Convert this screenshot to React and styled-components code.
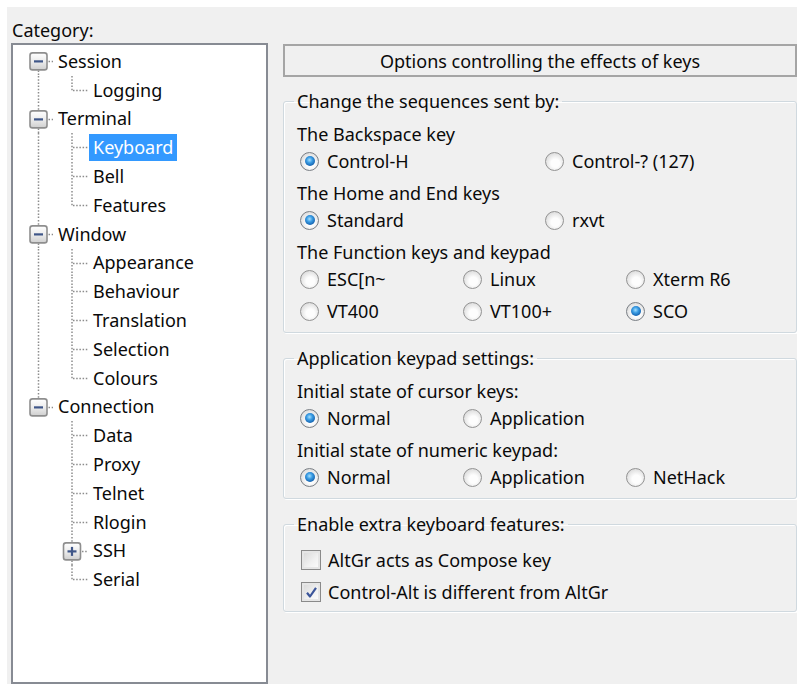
import React from "react";
import styled, { createGlobalStyle } from "styled-components";

const GlobalStyle = createGlobalStyle`
  html, body {
    margin: 0;
    background: #fff;
  }
  body {
    font-family: "Noto Sans", "Liberation Sans", sans-serif;
    font-size: 18px;
    color: #0a0a0a;
  }
`;

const ROW_H = 28.8;

const Dialog = styled.div`
  margin: 7px 0 0 7px;
  height: calc(100vh - 7px);
  box-sizing: border-box;
  background: #f0f0f0;
  padding-left: 4px;
  display: grid;
  grid-template-columns: 257px 1fr;
  grid-template-rows: 36px 1fr;
  column-gap: 15px;
  overflow: hidden;
`;

const CategoryLabel = styled.div`
  grid-column: 1;
  padding: 11px 0 0 1px;
  line-height: 24px;
`;

const TreeBox = styled.div`
  grid-column: 1;
  grid-row: 2;
  height: 641px;
  box-sizing: border-box;
  border: 2px solid #878b93;
  background: #fff;
  padding-top: 2px;
`;

const TreeRow = styled.div`
  display: flex;
  align-items: center;
  height: ${ROW_H}px;
`;

const Guides = styled.svg`
  display: block;
  flex: none;
  overflow: visible;
`;

const NodeLabel = styled.span`
  padding: 0 4px;
  height: 27px;
  line-height: 27px;
  white-space: nowrap;
  background: ${(p) => (p.$selected ? "#3399ff" : "transparent")};
  color: ${(p) => (p.$selected ? "#fff" : "inherit")};
`;

const Panel = styled.div`
  grid-column: 2;
  grid-row: 2;
  margin-top: 1px;
  display: flex;
  flex-direction: column;
  gap: 15px;
  min-width: 0;
`;

const Banner = styled.div`
  height: 33px;
  box-sizing: border-box;
  border: 2px solid #a5a5a5;
  margin-bottom: -1px;
  display: flex;
  align-items: center;
  justify-content: center;
`;

const Group = styled.fieldset`
  margin: 0;
  padding: 0 0 ${(p) => p.$padBottom}px 0;
  border: 1px solid #d0d9df;
  border-radius: 3px;
  box-shadow: inset 1px 1px 0 #fff, 1px 1px 0 #fff;
  min-width: 0;
`;

const Legend = styled.legend`
  margin-left: 10px;
  padding: 0 3px;
  line-height: 20px;
`;

const GroupBody = styled.div`
  padding: ${(p) => p.$padTop}px 0 0 13px;
  display: flex;
  flex-direction: column;
`;

const Caption = styled.div`
  height: 22px;
  line-height: 22px;
  white-space: nowrap;
`;

const OptionRow = styled.div`
  display: grid;
  grid-template-columns: repeat(${(p) => p.$cols}, ${(p) => p.$colWidth}px);
  height: 32px;
  align-items: center;
  padding-left: ${(p) => p.$inset}px;
  & + ${Caption} {
    margin-top: 5px;
  }
`;

const Option = styled.label`
  display: flex;
  align-items: center;
  gap: ${(p) => p.$gap}px;
  white-space: nowrap;
`;

const RadioMark = styled.span`
  width: 19px;
  height: 19px;
  flex: none;
  box-sizing: border-box;
  border-radius: 50%;
  border: 1.5px solid ${(p) => (p.$on ? "#7a7f85" : "#939393")};
  background: radial-gradient(circle at 55% 60%, #fdfdfd 0 30%, #e4e4e4 65%, #c9c9c9 100%);
  display: grid;
  place-items: center;
  &::after {
    content: "";
    width: 10px;
    height: 10px;
    border-radius: 50%;
    background: ${(p) =>
      p.$on
        ? "radial-gradient(circle at 45% 40%, #a6e0ff 0, #3a9ce3 35%, #1460ad 75%, #0d3e76 100%)"
        : "transparent"};
  }
`;

const CheckMark = styled.span`
  width: 20px;
  height: 20px;
  flex: none;
  box-sizing: border-box;
  border: 1.5px solid #8a8a8a;
  background: linear-gradient(135deg, #d6d6d6, #f2f2f2 60%, #fdfdfd);
  box-shadow: inset 0 0 0 2px #e6e6e6;
  display: grid;
  place-items: center;
`;

const treeData = [
  { label: "Session", children: ["Logging"] },
  { label: "Terminal", children: ["Keyboard", "Bell", "Features"] },
  {
    label: "Window",
    children: ["Appearance", "Behaviour", "Translation", "Selection", "Colours"],
  },
  {
    label: "Connection",
    children: ["Data", "Proxy", "Telnet", "Rlogin", { label: "SSH", collapsed: true }, "Serial"],
  },
];

const flattenTree = (nodes) => {
  const rows = [];
  nodes.forEach((node, i) => {
    const lastTop = i === nodes.length - 1;
    rows.push({ label: node.label, level: 0, first: i === 0, last: lastTop, expander: "minus" });
    node.children.forEach((child, j) => {
      const c = typeof child === "string" ? { label: child } : child;
      rows.push({
        label: c.label,
        level: 1,
        last: j === node.children.length - 1,
        trunk: !lastTop,
        expander: c.collapsed ? "plus" : null,
      });
    });
  });
  return rows;
};

const TRUNK_X = 25.5;
const BRANCH_X = 59;
const DOT = { stroke: "#8c8c8c", strokeWidth: 1.5, strokeDasharray: "1.5 1.7" };

const Expander = ({ cx, cy, kind }) => (
  <g>
    <rect
      x={cx - 8.5}
      y={cy - 8.5}
      width="17"
      height="17"
      rx="2.5"
      fill="url(#expanderFill)"
      stroke="#8e8e8e"
      strokeWidth="1.6"
    />
    <line x1={cx - 4.5} y1={cy} x2={cx + 4.5} y2={cy} stroke="#3f5688" strokeWidth="2.2" />
    {kind === "plus" && (
      <line x1={cx} y1={cy - 4.5} x2={cx} y2={cy + 4.5} stroke="#3f5688" strokeWidth="2.2" />
    )}
  </g>
);

const RowGuides = ({ row }) => {
  const cy = ROW_H / 2;
  const width = row.level === 0 ? 41 : 76;
  return (
    <Guides width={width} height={ROW_H}>
      <defs>
        <linearGradient id="expanderFill" x1="0" y1="0" x2="0" y2="1">
          <stop offset="0" stopColor="#ffffff" />
          <stop offset="0.5" stopColor="#ececec" />
          <stop offset="1" stopColor="#cfcfcf" />
        </linearGradient>
      </defs>
      {row.level === 0 && (
        <>
          {!row.first && <line x1={TRUNK_X} y1={0} x2={TRUNK_X} y2={cy - 8} {...DOT} />}
          {!row.last && <line x1={TRUNK_X} y1={cy + 9} x2={TRUNK_X} y2={ROW_H} {...DOT} />}
          <line x1={TRUNK_X + 10} y1={cy} x2={40} y2={cy} {...DOT} />
          <Expander cx={TRUNK_X} cy={cy} kind={row.expander} />
        </>
      )}
      {row.level === 1 && (
        <>
          {row.trunk && <line x1={TRUNK_X} y1={0} x2={TRUNK_X} y2={ROW_H} {...DOT} />}
          {row.expander ? (
            <>
              <line x1={BRANCH_X} y1={0} x2={BRANCH_X} y2={cy - 8} {...DOT} />
              {!row.last && <line x1={BRANCH_X} y1={cy + 9} x2={BRANCH_X} y2={ROW_H} {...DOT} />}
              <line x1={BRANCH_X + 10} y1={cy} x2={75} y2={cy} {...DOT} />
              <Expander cx={BRANCH_X} cy={cy} kind={row.expander} />
            </>
          ) : (
            <>
              <line x1={BRANCH_X} y1={0} x2={BRANCH_X} y2={row.last ? cy : ROW_H} {...DOT} />
              <line x1={BRANCH_X + 1} y1={cy} x2={75} y2={cy} {...DOT} />
            </>
          )}
        </>
      )}
    </Guides>
  );
};

const CategoryTree = ({ selected }) => (
  <TreeBox>
    {flattenTree(treeData).map((row) => (
      <TreeRow key={row.label}>
        <RowGuides row={row} />
        <NodeLabel $selected={row.label === selected}>{row.label}</NodeLabel>
      </TreeRow>
    ))}
  </TreeBox>
);

const Radio = ({ label, on }) => (
  <Option $gap={8}>
    <RadioMark $on={on} />
    {label}
  </Option>
);

const Checkbox = ({ label, on }) => (
  <Option $gap={7}>
    <CheckMark>
      {on && (
        <svg width="13" height="13" viewBox="0 0 13 13">
          <path
            d="M2 6.8 L5 10.5 L11 1.8"
            fill="none"
            stroke="#3b559a"
            strokeWidth="2.2"
            strokeLinejoin="round"
          />
        </svg>
      )}
    </CheckMark>
    {label}
  </Option>
);

const RadioRow = ({ cols, options, value }) => (
  <OptionRow $cols={cols} $colWidth={cols === 3 ? 163 : 245} $inset={3}>
    {options.map((o) => (
      <Radio key={o} label={o} on={o === value} />
    ))}
  </OptionRow>
);

export default function App() {
  return (
    <>
      <GlobalStyle />
      <Dialog>
        <CategoryLabel>Category:</CategoryLabel>
        <CategoryTree selected="Keyboard" />
        <Panel>
          <Banner>Options controlling the effects of keys</Banner>

          <Group $padBottom={5}>
            <Legend>Change the sequences sent by:</Legend>
            <GroupBody $padTop={12}>
              <Caption>The Backspace key</Caption>
              <RadioRow cols={2} options={["Control-H", "Control-? (127)"]} value="Control-H" />
              <Caption>The Home and End keys</Caption>
              <RadioRow cols={2} options={["Standard", "rxvt"]} value="Standard" />
              <Caption>The Function keys and keypad</Caption>
              <RadioRow cols={3} options={["ESC[n~", "Linux", "Xterm R6"]} />
              <RadioRow cols={3} options={["VT400", "VT100+", "SCO"]} value="SCO" />
            </GroupBody>
          </Group>

          <Group $padBottom={5}>
            <Legend>Application keypad settings:</Legend>
            <GroupBody $padTop={12}>
              <Caption>Initial state of cursor keys:</Caption>
              <RadioRow cols={3} options={["Normal", "Application"]} value="Normal" />
              <Caption>Initial state of numeric keypad:</Caption>
              <RadioRow cols={3} options={["Normal", "Application", "NetHack"]} value="Normal" />
            </GroupBody>
          </Group>

          <Group $padBottom={3}>
            <Legend>Enable extra keyboard features:</Legend>
            <GroupBody $padTop={10}>
              <OptionRow $cols={1} $colWidth={480} $inset={4}>
                <Checkbox label="AltGr acts as Compose key" />
              </OptionRow>
              <OptionRow $cols={1} $colWidth={480} $inset={4}>
                <Checkbox label="Control-Alt is different from AltGr" on />
              </OptionRow>
            </GroupBody>
          </Group>
        </Panel>
      </Dialog>
    </>
  );
}
